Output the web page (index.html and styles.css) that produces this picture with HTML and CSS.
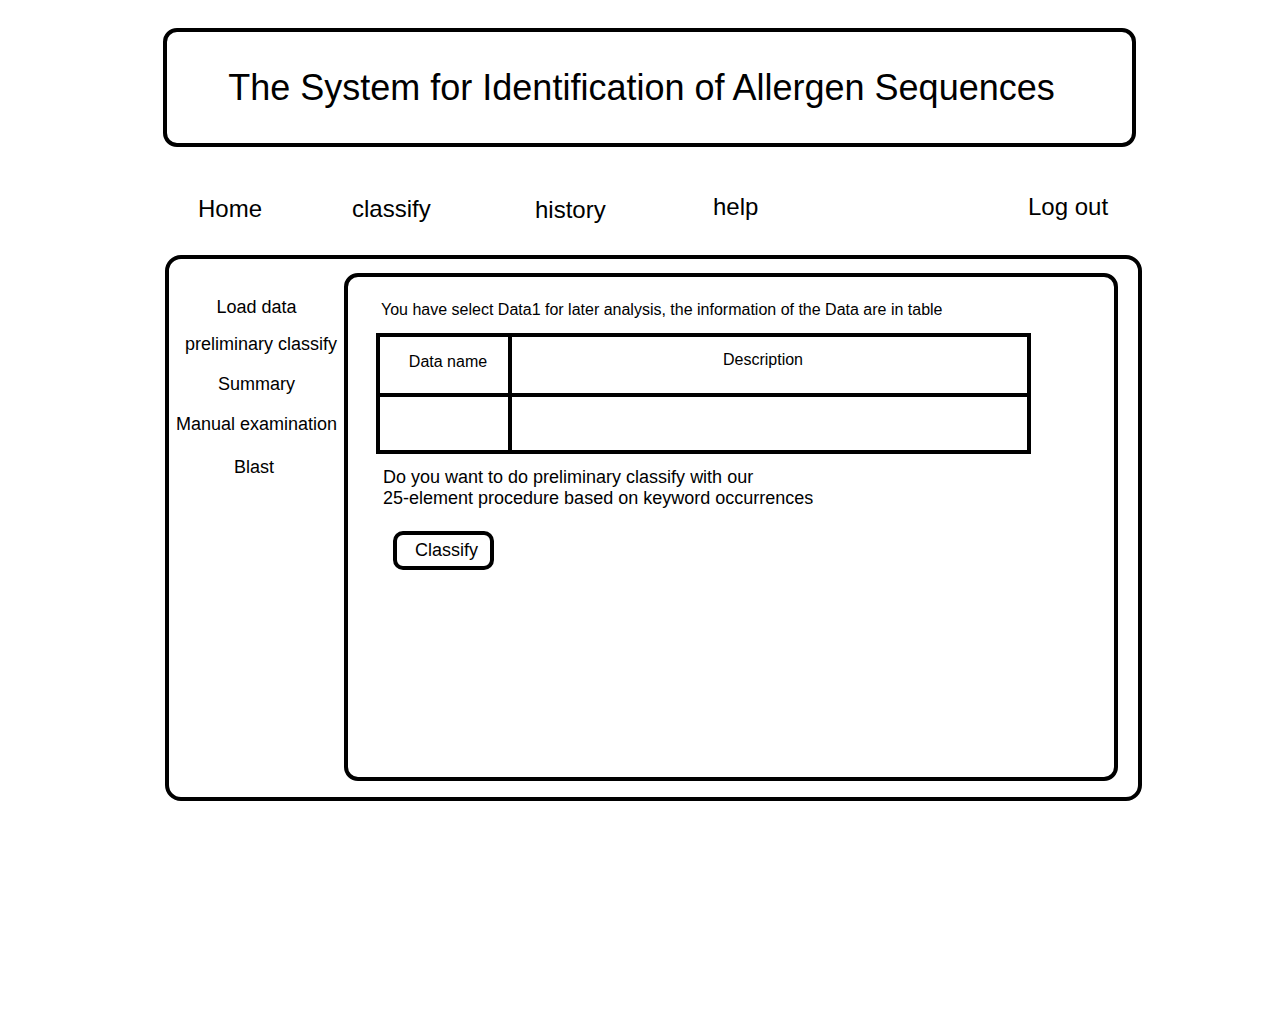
FILE: index.html
```html
<!DOCTYPE html>
<html lang="en">
<head>
    <meta charset="UTF-8">
    <meta name="viewport" content="width=device-width, initial-scale=1.0">
    <title>Allergen Sequences - Classify</title>
    <link rel="stylesheet" href="styles.css">
</head>
<body>
    <header class="title-box">
        <h1>The System for Identification of Allergen Sequences</h1>
    </header>

    <nav class="topnav">
        <a href="#" class="nav-home">Home</a>
        <a href="#" class="nav-classify">classify</a>
        <a href="#" class="nav-history">history</a>
        <a href="#" class="nav-help">help</a>
        <a href="#" class="nav-logout">Log out</a>
    </nav>

    <div class="main-box">
        <ul class="sidebar">
            <li>Load data</li>
            <li class="side-prelim">preliminary classify</li>
            <li>Summary</li>
            <li>Manual examination</li>
            <li class="side-blast">Blast</li>
        </ul>

        <section class="content">
            <p class="intro">You have select Data1 for later analysis, the information of the Data are in table</p>
            <table class="data-table">
                <tr>
                    <th class="col-name">Data name</th>
                    <th class="col-desc">Description</th>
                </tr>
                <tr>
                    <td class="col-name"></td>
                    <td class="col-desc"></td>
                </tr>
            </table>
            <p class="question">Do you want to do preliminary classify with our<br>25-element procedure based on keyword occurrences</p>
            <button id="classify" class="classify-btn">Classify</button>
        </section>
    </div>
</body>
</html>
```

FILE: styles.css
```css
body {
    margin: 0;
    font-family: "Liberation Sans", Arial, sans-serif;
    color: #000;
    background: #fff;
}

.title-box {
    box-sizing: border-box;
    width: 973px;
    height: 119px;
    margin: 28px 0 0 163px;
    border: 4px solid #000;
    border-radius: 14px;
    display: flex;
    align-items: center;
    justify-content: center;
    padding-right: 16px;
}

h1 {
    margin: 0;
    font-size: 36px;
    font-weight: normal;
    line-height: 40px;
}

.topnav {
    display: grid;
    grid-template-columns: 154px 183px 178px 315px auto;
    margin: 48px 0 0 198px;
    font-size: 24px;
    line-height: 28px;
}

.topnav a {
    color: #000;
    text-decoration: none;
}

.nav-history {
    padding-top: 1px;
}

.nav-help,
.nav-logout {
    margin-top: -2px;
}

.main-box {
    box-sizing: border-box;
    width: 977px;
    height: 546px;
    margin: 31px 0 0 165px;
    border: 4px solid #000;
    border-radius: 16px;
    display: flex;
    padding: 14px 20px 16px 0;
}

.sidebar {
    width: 175px;
    margin: 0;
    padding: 24px 0 0;
    list-style: none;
    display: flex;
    flex-direction: column;
    gap: 19px;
    font-size: 18px;
    line-height: 21px;
    text-align: center;
}

.side-prelim {
    margin-top: -3px;
    padding-left: 9px;
}

.side-blast {
    margin-top: 3px;
    padding-right: 5px;
}

.content {
    flex: 1;
    border: 4px solid #000;
    border-radius: 14px;
    padding: 24px 0 0 28px;
}

.intro {
    margin: 0;
    padding-left: 5px;
    font-size: 16px;
    line-height: 18px;
}

.data-table {
    box-sizing: border-box;
    width: 655px;
    margin-top: 14px;
    border: 4px solid #000;
    border-spacing: 0;
    table-layout: fixed;
    font-size: 16px;
    line-height: 19px;
}

.data-table th {
    box-sizing: border-box;
    height: 60px;
    padding: 0;
    font-weight: normal;
    vertical-align: top;
    border-bottom: 4px solid #000;
}

.data-table td {
    height: 53px;
    padding: 0;
}

.data-table .col-name {
    width: 132px;
    border-right: 4px solid #000;
}

.data-table th.col-name {
    padding: 15px 0 0 8px;
}

.data-table th.col-desc {
    padding: 13px 13px 0 0;
}

.question {
    margin: 13px 0 0;
    padding-left: 7px;
    font-size: 18px;
    line-height: 21px;
}

.classify-btn {
    display: block;
    box-sizing: border-box;
    width: 101px;
    height: 39px;
    margin: 22px 0 0 17px;
    padding: 0 0 0 18px;
    border: 4px solid #000;
    border-radius: 10px;
    background: #fff;
    color: #000;
    font-family: inherit;
    font-size: 18px;
    text-align: left;
    cursor: pointer;
}
```
